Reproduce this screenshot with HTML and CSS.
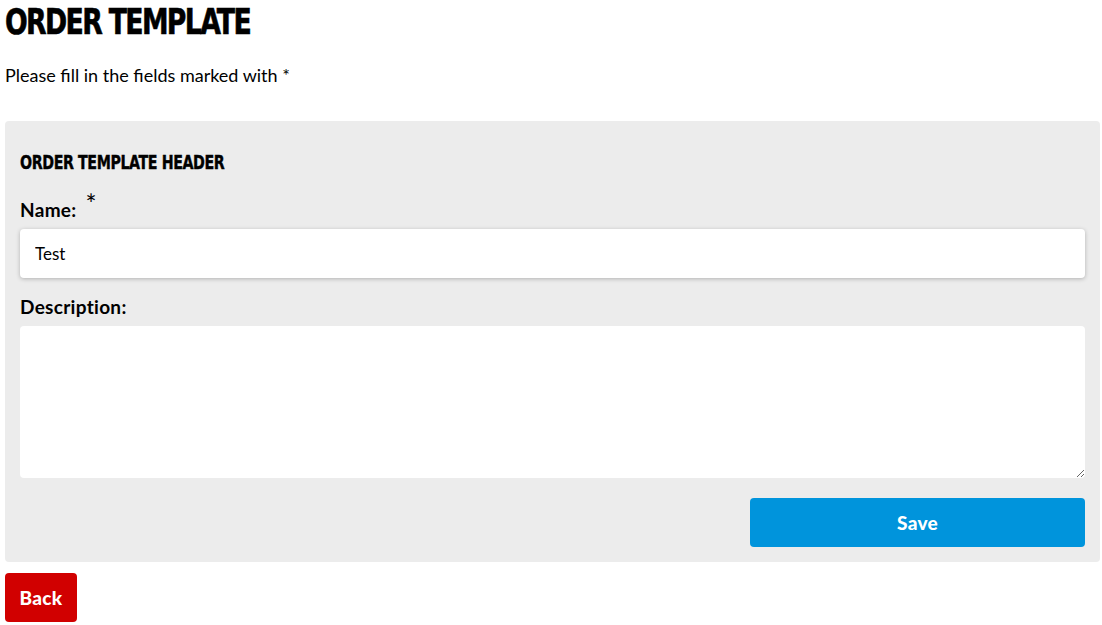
FILE: index.html
```html
<!DOCTYPE html>
<html lang="en">
<head>
<meta charset="utf-8">
<title>Order Template</title>
<link rel="stylesheet" href="styles.css">
</head>
<body>
<div class="page">
  <h1 class="title"><span class="squeeze">ORDER TEMPLATE</span></h1>
  <p class="intro">Please fill in the fields marked with *</p>
  <form class="panel">
    <h2 class="panel-title"><span class="squeeze">ORDER TEMPLATE HEADER</span></h2>
    <label class="label label-name" for="name">Name: <span class="req">*</span></label>
    <input class="field" id="name" type="text" value="Test">
    <label class="label label-desc" for="desc">Description:</label>
    <textarea class="field area" id="desc"></textarea>
    <div class="actions">
      <button type="button" class="btn btn-save">Save</button>
    </div>
  </form>
  <button type="button" class="btn btn-back">Back</button>
</div>
</body>
</html>
```
FILE: styles.css
```css
* { box-sizing: border-box; }
body {
  margin: 0;
  background: #fff;
  color: #000;
  font-family: Lato, "Liberation Sans", sans-serif;
}
.page {
  padding: 0 2px 0 5px;
}
.squeeze {
  display: inline-block;
  transform-origin: left center;
  -webkit-text-stroke: 0.6px #000;
}
.title {
  margin: 0;
  padding-top: 2px;
  font-family: "DejaVu Sans Condensed", sans-serif;
  font-weight: 700;
  font-size: 36px;
  line-height: 40px;
  letter-spacing: -2px;
}
.title .squeeze { transform: scaleX(0.825); }
.intro {
  margin: 22px 0 0;
  font-size: 18px;
  line-height: 22px;
}
.panel {
  margin-top: 35px;
  background: #ececec;
  border-radius: 4px;
  padding: 30px 15px 15px;
  display: flex;
  flex-direction: column;
}
.panel-title {
  margin: 0;
  font-family: "DejaVu Sans Condensed", sans-serif;
  font-weight: 700;
  font-size: 20px;
  line-height: 22px;
  letter-spacing: -0.5px;
}
.panel-title .squeeze { transform: scaleX(0.79); -webkit-text-stroke: 0.4px #000; }
.label {
  font-weight: 700;
  font-size: 19px;
  line-height: 22px;
  letter-spacing: 0.3px;
  display: block;
}
.label-name { margin-top: 26px; }
.req {
  font-weight: 400;
  font-size: 26px;
  line-height: 0;
  position: relative;
  top: -3px;
  margin-left: 4px;
}
.field {
  margin-top: 8px;
  width: 100%;
  height: 49px;
  border: 0;
  border-radius: 4px;
  background: #fff;
  padding: 0 15px;
  font-family: Lato, "Liberation Sans", sans-serif;
  font-size: 17px;
  color: #000;
  box-shadow: 0 1px 4px rgba(0,0,0,0.25);
}
.label-desc { margin-top: 18px; }
.area {
  height: 152px;
  box-shadow: none;
  resize: vertical;
  padding: 10px 15px;
  display: block;
}
.actions {
  display: flex;
  justify-content: flex-end;
  margin-top: 20px;
}
.btn {
  border: 0;
  border-radius: 4px;
  height: 49px;
  color: #fff;
  font-family: Lato, "Liberation Sans", sans-serif;
  font-weight: 900;
  font-size: 19px;
  letter-spacing: 0.3px;
  cursor: pointer;
}
.btn-save {
  width: 335px;
  background: #0094dc;
}
.btn-back {
  margin-top: 11px;
  width: 72px;
  padding: 0;
  background: #d10000;
}
```
